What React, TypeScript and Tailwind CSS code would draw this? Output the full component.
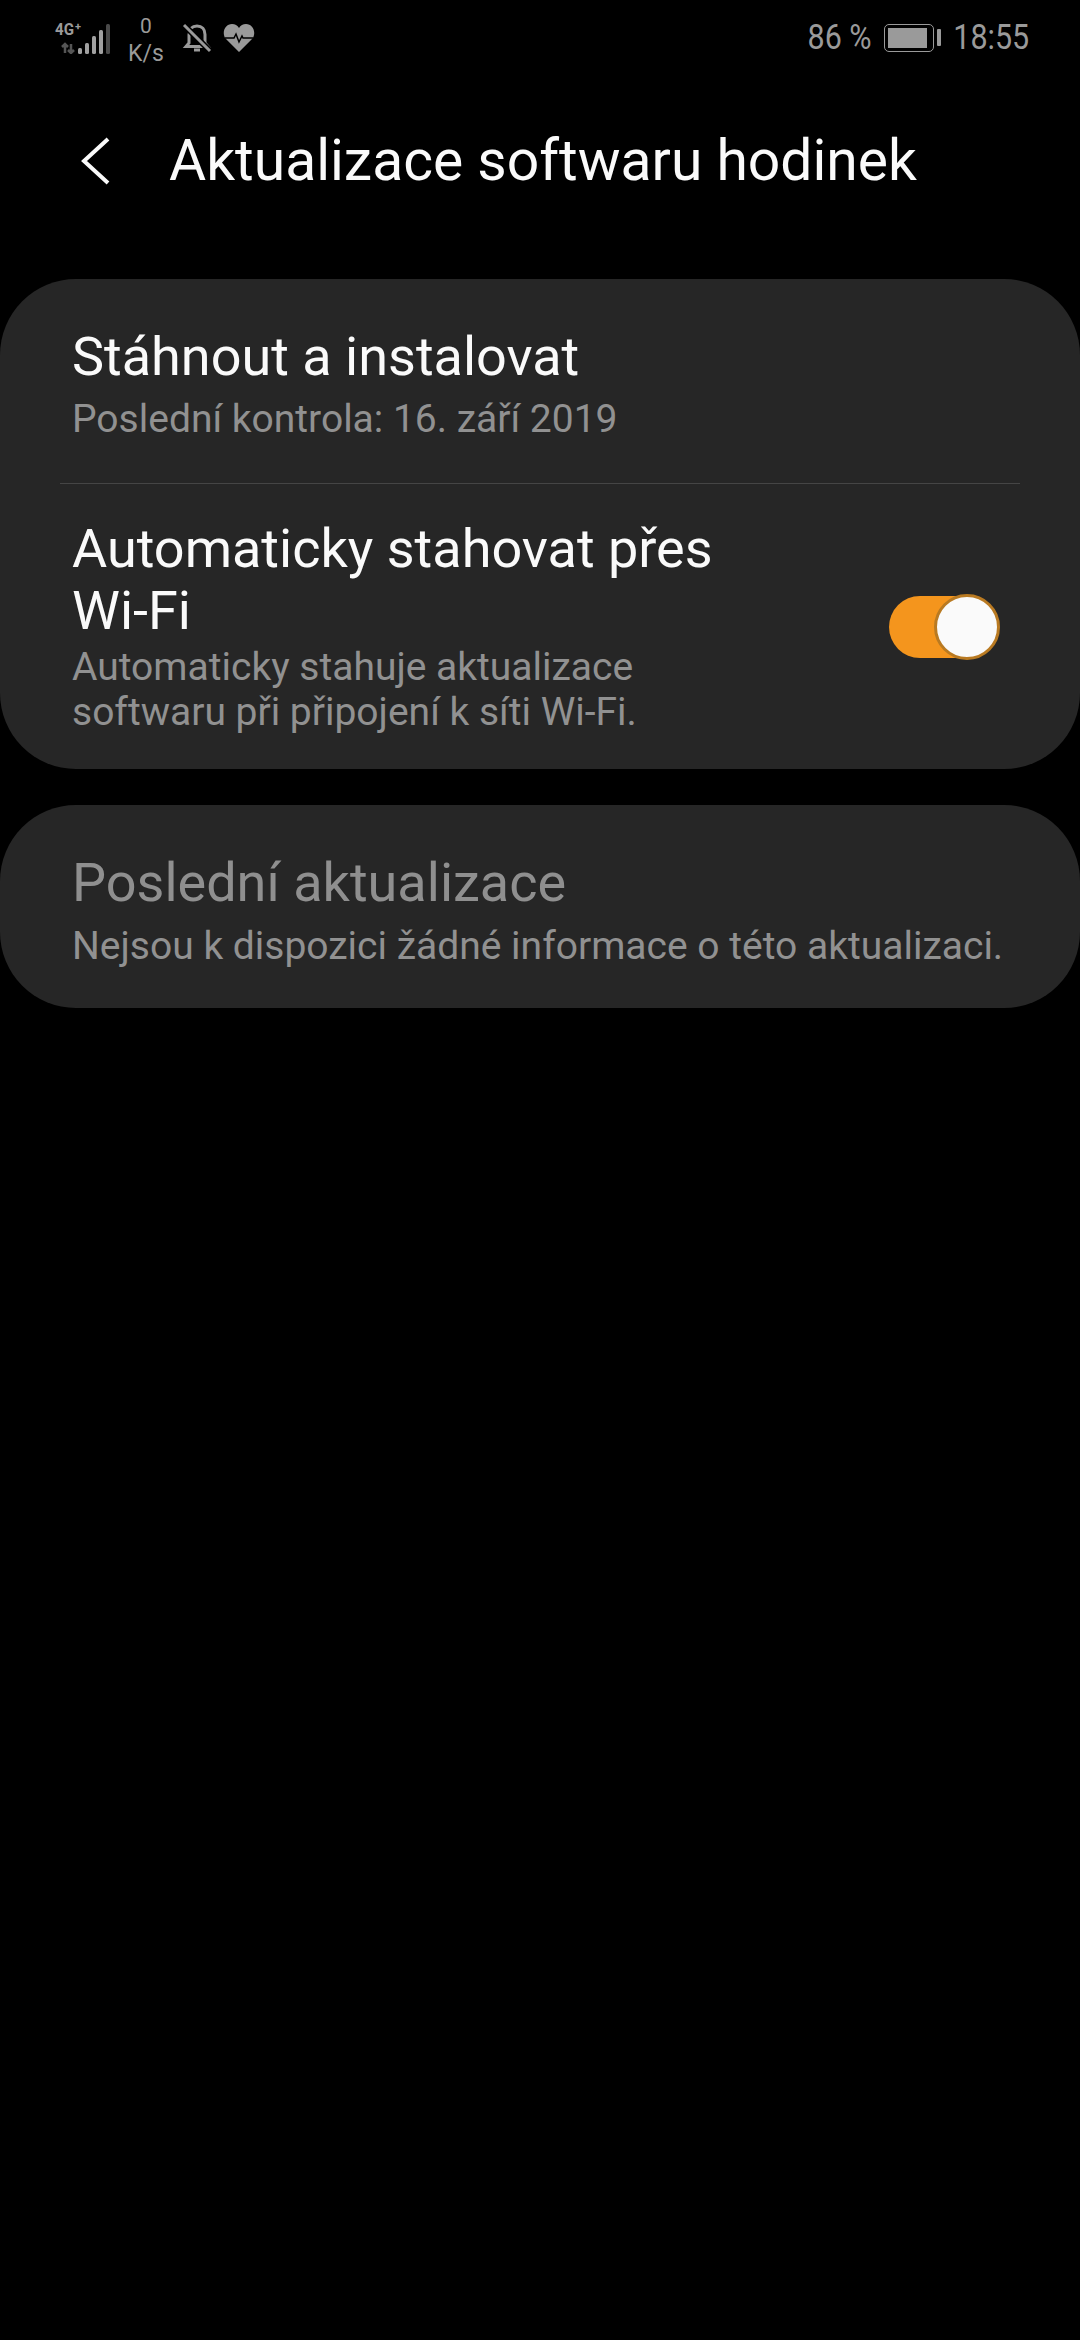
const font = "font-['Roboto',sans-serif]";

function StatusBar() {
  return (
    <div className="flex h-[80px] items-center justify-between pl-[54px] pr-[51px] text-[#9a9a9a]">
      <div className="flex items-center">
        <svg width="58" height="34" viewBox="0 0 58 34" className="mt-[-6px]">
          <text x="1" y="15" fontSize="16" fontWeight="700" fill="#9a9a9a" fontFamily="Roboto, sans-serif" textLength="19" lengthAdjust="spacingAndGlyphs">4G</text>
          <text x="21" y="10" fontSize="11" fontWeight="700" fill="#9a9a9a" fontFamily="Roboto, sans-serif">+</text>
          <path d="M11 33v-9M8 27l3-3 3 3" stroke="#555" strokeWidth="2.500" fill="none" />
          <path d="M17 24v9M14 30l3 3 3-3" stroke="#555" strokeWidth="2.500" fill="none" />
          <rect x="24" y="28" width="4" height="6" rx="1.500" fill="#a0a0a0" />
          <rect x="31" y="23" width="4" height="11" rx="1.500" fill="#a0a0a0" />
          <rect x="38" y="16" width="4" height="18" rx="1.500" fill="#a0a0a0" />
          <rect x="45" y="10" width="4" height="24" rx="1.500" fill="#a0a0a0" />
          <rect x="52" y="4" width="4" height="30" rx="1.500" fill="#4a4a4a" />
        </svg>
        <div className={`${font} ml-[16px] flex w-[36px] flex-col items-center text-[23px] leading-[27px]`}>
          <span className="text-[21px]">0</span>
          <span>K/s</span>
        </div>
        <svg width="30" height="32" viewBox="0 0 30 32" className="ml-[18px] mt-[-4px]">
          <path d="M15 4c-5 0-8 3.500-8 8.500v8.500l-3 3.500h22l-3-3.500v-8.500c0-5-3-8.500-8-8.500z" fill="none" stroke="#9a9a9a" strokeWidth="3" />
          <path d="M12 28h6" stroke="#9a9a9a" strokeWidth="3" />
          <path d="M2 3l26 26" stroke="#000" strokeWidth="6" />
          <path d="M2 3l26 26" stroke="#9a9a9a" strokeWidth="3" />
        </svg>
        <svg width="32" height="30" viewBox="0 0 32 30" className="ml-[11px] mt-[-4px]">
          <path d="M16 29 3 16C-2 10 2 1 9 1c3 0 5.500 1.500 7 4 1.500-2.500 4-4 7-4 7 0 11 9 6 15z" fill="#9a9a9a" />
          <path d="M2 15h9l2-4 3 8 3-6 1 2h10" fill="none" stroke="#000" strokeWidth="1.500" />
        </svg>
      </div>
      <div className={`${font} mt-[-5px] flex items-center text-[35px] leading-none`}>
        <span className="origin-right scale-x-[0.87] whitespace-nowrap">86 %</span>
        <div className="ml-[12px] flex items-center">
          <div className="h-[28px] w-[50px] rounded-[5px] border-[1.5px] border-[#9a9a9a] p-[3px]">
            <div className="h-full w-[39px] bg-[#9a9a9a]" />
          </div>
          <div className="ml-[3px] h-[17px] w-[4px] rounded-[1px] bg-[#9a9a9a]" />
        </div>
        <span className="ml-[1px] origin-right scale-x-[0.87] whitespace-nowrap">18:55</span>
      </div>
    </div>
  );
}

export default function App() {
  return (
    <div className={`${font} min-h-[2340px] w-[1080px] bg-black`}>
      <StatusBar />
      <div className="flex h-[160px] items-center pl-[81px] pt-[1px]">
        <svg width="30" height="50" viewBox="0 0 30 50" className="shrink-0">
          <path d="M27 3 3 25l24 22" fill="none" stroke="#fafafa" strokeWidth="4" />
        </svg>
        <div className="ml-[58px] whitespace-nowrap text-[57px] leading-none text-[#fafafa]">Aktualizace softwaru hodinek</div>
      </div>
      <div className="mt-[39px] rounded-[76px] bg-[#262626]">
        <div className="h-[204px] pl-[72px] pt-[47px]">
          <div className="text-[54px] leading-[62px] text-[#fafafa]">Stáhnout a instalovat</div>
          <div className="mt-[9px] text-[39px] leading-[44px] text-[#919191]">Poslední kontrola: 16. září 2019</div>
        </div>
        <div className="mx-[60px] h-[1px] bg-[#454545]" />
        <div className="flex h-[285px] items-center justify-between pl-[72px] pr-[81px]">
          <div className="w-[700px]">
            <div className="text-[54px] leading-[62px] text-[#fafafa]">Automaticky stahovat přes Wi-Fi</div>
            <div className="mt-[3px] text-[39px] leading-[45px] text-[#919191]">Automaticky stahuje aktualizace softwaru při připojení k síti Wi-Fi.</div>
          </div>
          <div className="relative h-[62px] w-[107px] -translate-x-[3px] rounded-full bg-[#f4951d]">
            <div className="absolute right-[-4px] top-[-2px] h-[66px] w-[66px] rounded-full border-[3px] border-[#b97a22] bg-[#fafafa]" />
          </div>
        </div>
      </div>
      <div className="mt-[36px] h-[203px] rounded-[76px] bg-[#262626] pl-[72px] pt-[47px]">
        <div className="text-[54px] leading-[62px] text-[#8f8f8f]">Poslední aktualizace</div>
        <div className="mt-[10px] whitespace-nowrap text-[39px] leading-[44px] text-[#919191]">Nejsou k dispozici žádné informace o této aktualizaci.</div>
      </div>
    </div>
  );
}
